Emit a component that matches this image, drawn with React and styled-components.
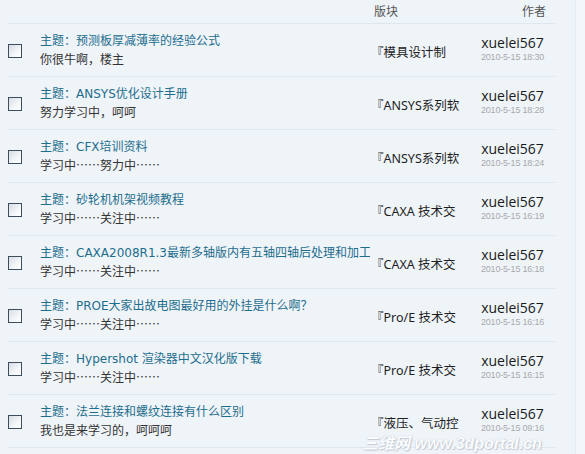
import React from "react";
import styled, { createGlobalStyle } from "styled-components";

const Global = createGlobalStyle`
  html, body {
    margin: 0;
    padding: 0;
    background: #eff4f9;
  }
`;

const Page = styled.div`
  position: relative;
  display: flex;
  width: 585px;
  height: 454px;
  overflow: hidden;
  background: #eff4f9;
  font-family: "Noto Sans", "Noto Sans CJK SC", sans-serif;
`;

const Main = styled.div`
  width: 547px;
  padding-left: 8px;
`;

const Side = styled.div`
  flex: 1;
  margin-left: 20px;
  border-left: 1px solid #e4ebf2;
  background: #f3f7fb;
`;

const Grid = styled.div`
  display: grid;
  grid-template-columns: 32px 330px 100px 85px;
  border-bottom: 1px solid #dfe7ee;
`;

const Header = styled(Grid)`
  height: 23px;
  font-size: 12px;
  color: #555;
  font-family: "Noto Sans CJK SC", sans-serif;
`;

const HeadCell = styled.div`
  padding-top: 2px;
  text-align: ${({ $right }) => ($right ? "right" : "left")};
  padding-left: ${({ $right }) => ($right ? "0" : "4px")};
  padding-right: ${({ $right }) => ($right ? "9px" : "0")};
`;

const Row = styled(Grid)`
  height: 52px;
  align-items: center;
`;

const Check = styled.span`
  display: block;
  width: 12px;
  height: 12px;
  margin-top: 1px;
  border: 1px solid #3d4d5c;
  background: linear-gradient(135deg, #d6dde5 0%, #f4f6f8 60%, #ffffff 100%);
`;

const Topic = styled.div`
  overflow: hidden;
  white-space: nowrap;
  font-size: 12px;
  line-height: 18px;
`;

const Title = styled.div`
  color: #1d6d8c;
  font-family: "DejaVu Sans", "Noto Sans CJK SC", sans-serif;
  font-size: 12px;
`;

const Sub = styled.div`
  color: #333;
  font-family: "Noto Sans CJK SC", sans-serif;
`;

const Board = styled.div`
  overflow: hidden;
  white-space: nowrap;
  padding-left: 1px;
  padding-top: 2px;
  font-size: 12.5px;
  color: #1e1e1e;
  font-family: "Noto Sans", "Noto Sans CJK SC", sans-serif;
`;

const Author = styled.div`
  text-align: center;
  padding-bottom: 2px;
`;

const Name = styled.div`
  font-family: "Open Sans", sans-serif;
  font-size: 14px;
  line-height: 16px;
  color: #1a1a1a;
`;

const Date = styled.div`
  font-family: "Liberation Sans", sans-serif;
  font-size: 9px;
  line-height: 12px;
  letter-spacing: -0.2px;
  color: #a9a9a9;
`;

const Mark = styled.div`
  position: absolute;
  left: 362px;
  top: 430px;
  font-family: "Liberation Sans", "Noto Sans CJK SC", sans-serif;
  font-size: 16px;
  font-weight: bold;
  font-style: italic;
  color: #fbfcfd;
  text-shadow: 0 0 1px #aeb9c4, 1px 1px 1px #c4ccd5;
  white-space: nowrap;
`;

const topics = [
  ["主题：预测板厚减薄率的经验公式", "你很牛啊，楼主", "『模具设计制", "2010-5-15 18:30"],
  ["主题：ANSYS优化设计手册", "努力学习中，呵呵", "『ANSYS系列软", "2010-5-15 18:28"],
  ["主题：CFX培训资料", "学习中……努力中……", "『ANSYS系列软", "2010-5-15 18:24"],
  ["主题：砂轮机机架视频教程", "学习中……关注中……", "『CAXA 技术交", "2010-5-15 16:19"],
  ["主题：CAXA2008R1.3最新多轴版内有五轴四轴后处理和加工", "学习中……关注中……", "『CAXA 技术交", "2010-5-15 16:18"],
  ["主题：PROE大家出故电图最好用的外挂是什么啊？", "学习中……关注中……", "『Pro/E 技术交", "2010-5-15 16:16"],
  ["主题：Hypershot 渲染器中文汉化版下载", "学习中……关注中……", "『Pro/E 技术交", "2010-5-15 16:15"],
  ["主题：法兰连接和螺纹连接有什么区别", "我也是来学习的，呵呵呵", "『液压、气动控", "2010-5-15 09:16"],
];

export default function App() {
  return (
    <Page>
      <Global />
      <Main>
        <Header>
          <div />
          <div />
          <HeadCell>版块</HeadCell>
          <HeadCell $right>作者</HeadCell>
        </Header>
        {topics.map(([title, sub, board, date], i) => (
          <Row key={i}>
            <Check />
            <Topic>
              <Title>{title}</Title>
              <Sub>{sub}</Sub>
            </Topic>
            <Board>{board}</Board>
            <Author>
              <Name>xuelei567</Name>
              <Date>{date}</Date>
            </Author>
          </Row>
        ))}
      </Main>
      <Side />
      <Mark>三维网 www.3dportal.cn</Mark>
    </Page>
  );
}
